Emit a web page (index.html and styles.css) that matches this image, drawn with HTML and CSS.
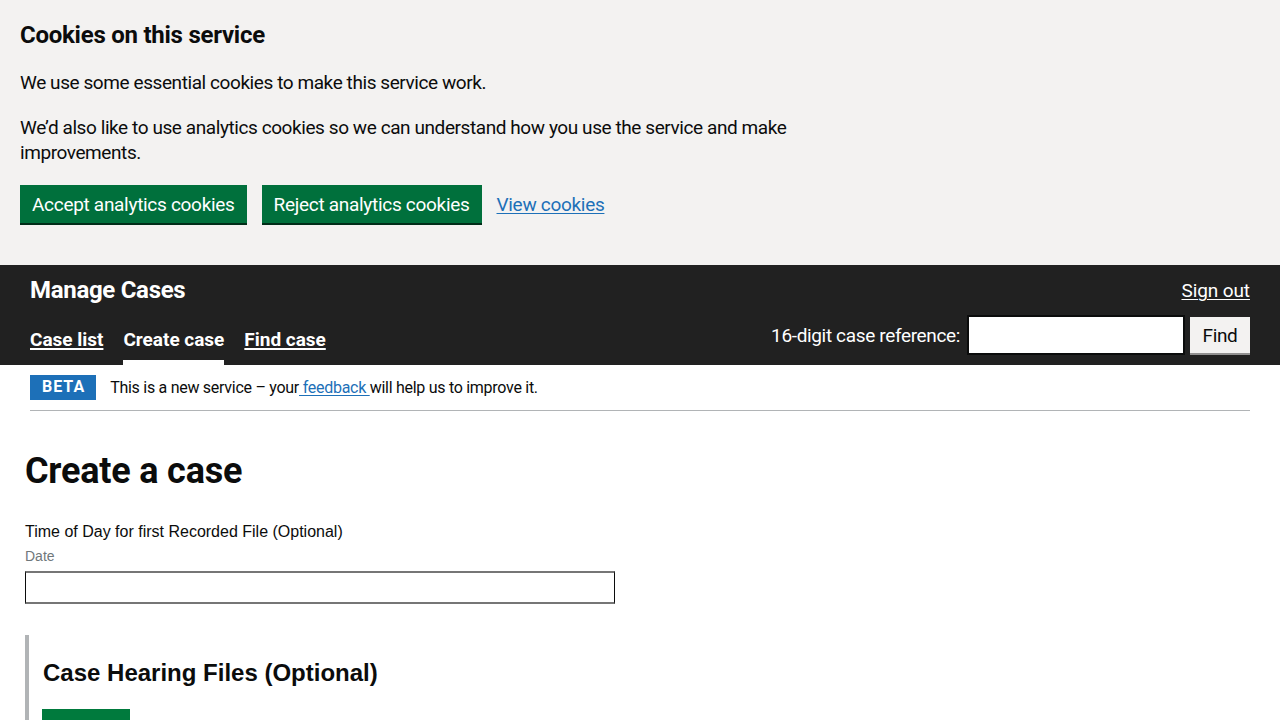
FILE: index.html
```html
<!DOCTYPE html>
<html lang="en">
<head>
<meta charset="utf-8">
<title>Create a case - Manage Cases</title>
<link rel="stylesheet" href="styles.css">
</head>
<body>
<div class="cookie-banner">
  <div class="cookie-inner">
    <h2 class="cookie-heading">Cookies on this service</h2>
    <p class="cookie-text">We use some essential cookies to make this service work.</p>
    <p class="cookie-text">We’d also like to use analytics cookies so we can understand how you use the service and make improvements.</p>
    <div class="button-group">
      <button class="govuk-button" type="button">Accept analytics cookies</button>
      <button class="govuk-button" type="button">Reject analytics cookies</button>
      <a class="govuk-link" href="#">View cookies</a>
    </div>
  </div>
</div>

<header class="header">
  <div class="header-top">
    <span class="service-name">Manage Cases</span>
    <a class="header-link" href="#">Sign out</a>
  </div>
  <div class="header-bottom">
    <nav class="nav">
      <a class="nav-item" href="#">Case list</a>
      <a class="nav-item active" href="#">Create case</a>
      <a class="nav-item" href="#">Find case</a>
    </nav>
    <form class="search">
      <label class="search-label" for="caseRef">16-digit case reference:</label>
      <input class="search-input" id="caseRef" type="text">
      <button class="search-button" type="button">Find</button>
    </form>
  </div>
</header>

<div class="phase-banner">
  <strong class="tag">Beta</strong>
  <span class="phase-text">This is a new service – your<a class="govuk-link" href="#">&nbsp;feedback&nbsp;</a>will help us to improve it.</span>
</div>

<main class="main">
  <h1 class="page-title">Create a case</h1>
  <div class="form-group">
    <label class="form-label" for="timeOfDay">Time of Day for first Recorded File (Optional)</label>
    <div class="form-hint">Date</div>
    <input class="form-input" id="timeOfDay" type="text">
  </div>
  <fieldset class="panel">
    <h2 class="panel-title">Case Hearing Files (Optional)</h2>
    <button class="add-button" type="button" aria-label="Add file"></button>
    <div class="spacer"></div>
  </fieldset>
</main>
</body>
</html>
```

FILE: styles.css
```css
* { box-sizing: border-box; }

html, body {
  margin: 0;
  padding: 0;
}

body {
  font-family: Roboto, "Liberation Sans", Arial, sans-serif;
  color: #0b0c0c;
  background: #ffffff;
  letter-spacing: -0.35px;
}

/* Cookie banner */
.cookie-banner {
  background: #f3f2f1;
  padding: 20px 20px 20px;
}

.cookie-inner {
  max-width: 817px;
}

.cookie-heading {
  margin: 0 0 20px;
  font-size: 24px;
  line-height: 30px;
  font-weight: 700;
  letter-spacing: -0.25px;
}

.cookie-text {
  margin: 0 0 20px;
  font-size: 19px;
  line-height: 25px;
  letter-spacing: -0.42px;
}

.button-group {
  display: flex;
  align-items: center;
  gap: 15px;
  margin-bottom: 22px;
}

.govuk-button {
  font-family: inherit;
  letter-spacing: -0.3px;
  font-size: 19px;
  line-height: 19px;
  padding: 8px 10px 7px;
  border: 2px solid transparent;
  border-radius: 0;
  background: #00703c;
  color: #ffffff;
  box-shadow: 0 2px 0 #002d18;
  cursor: pointer;
}

.govuk-link {
  color: #1d70b8;
  text-decoration: underline;
  text-decoration-thickness: 1px;
  text-underline-offset: 2px;
  font-size: 19px;
}

.button-group .govuk-link {
  letter-spacing: -0.3px;
}

/* Header */
.header {
  background: #212121;
  color: #ffffff;
  padding: 0 30px;
}

.header-top {
  display: flex;
  justify-content: space-between;
  align-items: center;
  padding: 10px 0;
}

.service-name {
  font-size: 24px;
  line-height: 30px;
  font-weight: 700;
  letter-spacing: -0.3px;
}

.header-link {
  color: #ffffff;
  font-size: 19px;
  line-height: 25px;
  text-decoration: underline;
  text-decoration-thickness: 1px;
  text-underline-offset: 2px;
  letter-spacing: -0.1px;
}

.header-bottom {
  display: flex;
  justify-content: space-between;
  align-items: flex-start;
}

.nav {
  display: flex;
  gap: 20px;
}

.nav-item {
  color: #ffffff;
  font-size: 19px;
  line-height: 25px;
  font-weight: 700;
  letter-spacing: -0.02px;
  text-decoration: underline;
  text-underline-offset: 2px;
  text-decoration-thickness: 2px;
  padding: 12px 0 8px;
  border-bottom: 5px solid transparent;
}

.nav-item.active {
  text-decoration: none;
  border-bottom-color: #ffffff;
}

.search {
  display: flex;
  align-items: center;
  margin: 0;
}

.search-label {
  font-size: 19px;
  line-height: 25px;
  margin-right: 7px;
}

.search-input {
  width: 218px;
  height: 40px;
  border: 2px solid #0b0c0c;
  background: #ffffff;
  font-size: 19px;
  padding: 5px;
  margin: 0;
}

.search-button {
  width: 60px;
  height: 36px;
  margin-left: 5px;
  border: 0;
  background: #f3f2f1;
  color: #0b0c0c;
  font-family: inherit;
  letter-spacing: inherit;
  font-size: 19px;
  line-height: 19px;
  box-shadow: 0 2px 0 #929191;
  padding: 0;
}

/* Phase banner */
.phase-banner {
  margin: 0 30px;
  padding: 10px 0;
  border-bottom: 1px solid #b1b4b6;
  display: flex;
  align-items: center;
}

.tag {
  display: inline-block;
  background: #1d70b8;
  color: #ffffff;
  font-size: 16px;
  line-height: 20px;
  font-weight: 700;
  letter-spacing: 1px;
  text-transform: uppercase;
  padding: 2px 11px 3px 12px;
  margin-right: 14px;
}

.phase-text {
  font-size: 16px;
  line-height: 20px;
  letter-spacing: -0.28px;
}

.phase-text .govuk-link {
  font-size: 16px;
}

/* Main */
.main {
  padding: 40px 25px 40px;
}

.page-title {
  margin: 0 0 30px;
  font-size: 36px;
  line-height: 40px;
  font-weight: 700;
  letter-spacing: -0.2px;
}

.form-group {
  font-family: "Liberation Sans", Arial, sans-serif;
  letter-spacing: 0;
  width: 590px;
}

.form-label {
  display: block;
  font-size: 16px;
  line-height: 22px;
  color: #0b0c0c;
  margin-bottom: 3px;
}

.form-hint {
  font-size: 14px;
  line-height: 20px;
  color: #6f777b;
  margin-bottom: 5px;
}

.form-input {
  display: block;
  width: 590px;
  height: 33px;
  border-style: solid;
  border-width: 2px 1px;
  border-color: #767676 #0b0c0c;
  padding: 4px 8px;
  margin: 0;
  font-size: 16px;
}

.panel {
  margin: 31px 0 0;
  padding: 24px 0 0 13px;
  border: 0;
  border-left: 4px solid #b1b4b6;
  font-family: "Liberation Sans", Arial, sans-serif;
  letter-spacing: 0;
}

.panel-title {
  margin: 0 0 22px 1px;
  font-size: 24px;
  line-height: 28px;
  font-weight: 700;
}

.add-button {
  display: block;
  width: 88px;
  height: 38px;
  background: #007a3d;
  color: #ffffff;
  border: 0;
  padding: 0;
}

.spacer {
  height: 60px;
}
```
